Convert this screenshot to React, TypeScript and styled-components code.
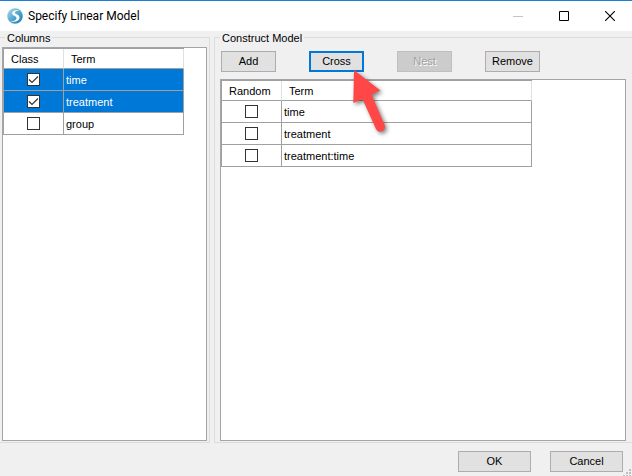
import React, { useState } from "react";
import styled, { createGlobalStyle, css } from "styled-components";

const GlobalStyle = createGlobalStyle`
  * { box-sizing: border-box; }
  body {
    margin: 0;
    background: #f0f0f0;
    color: #000;
    font: 11px/13px "Liberation Sans", Arial, sans-serif;
  }
  button, input { font: inherit; color: inherit; }
`;

const Dialog = styled.main`
  display: flex;
  flex-direction: column;
  min-height: 100vh;
  background: #f0f0f0;
`;

const TitleBar = styled.header`
  display: flex;
  align-items: center;
  height: 31px;
  padding-left: 7px;
  border-top: 1px solid #1a7fd4;
  background: #fff;
`;

const Title = styled.h1`
  flex: 1;
  margin: 0 0 0 5px;
  font: 12px/16px Roboto, "Open Sans", sans-serif;
`;

const CaptionButton = styled.button`
  display: grid;
  place-items: center;
  width: 46px;
  height: 29px;
  padding: 0;
  border: 0;
  background: none;
  &:last-child { margin-right: -1px; }
`;

const Panels = styled.div`
  display: grid;
  grid-template-columns: 210px 1fr;
  gap: 4px;
  flex: 1;
`;

const Group = styled.fieldset<{ $side: "left" | "right" }>`
  display: flex;
  flex-direction: column;
  min-width: 0;
  margin: 0;
  border: 1px solid #dcdcdc;
  ${({ $side }) =>
    $side === "left"
      ? css`border-left: 0; padding: 3px 2px 1px 2px;`
      : css`border-right: 0; padding: 7px 6px 1px 5px;`}
`;

const Legend = styled.legend<{ $indent: number }>`
  height: 13px;
  margin-left: ${({ $indent }) => $indent}px;
  padding: 0 2px;
  line-height: 15px;
`;

const ListBox = styled.div`
  flex: 1;
  border: 1px solid #a3a5ad;
  background: #fff;
`;

const Table = styled.table<{ $termWidth: number }>`
  table-layout: fixed;
  width: ${({ $termWidth }) => $termWidth + 61}px;
  border-collapse: separate;
  border-spacing: 0;
  border-top: 1px solid #a0a0a0;
  border-left: 1px solid #a0a0a0;
`;

const HeadCell = styled.th<{ $narrow?: boolean }>`
  width: ${({ $narrow }) => ($narrow ? "60px" : "auto")};
  height: 20px;
  padding: 2px 0 0 7px;
  border-right: 1px solid #e0e0e0;
  border-bottom: 1px solid #a0a0a0;
  font-weight: normal;
  text-align: left;
`;

const Row = styled.tr<{ $selected?: boolean }>`
  background: ${({ $selected }) => ($selected ? "#0078d7" : "#fff")};
  color: ${({ $selected }) => ($selected ? "#fff" : "#000")};
`;

const Cell = styled.td`
  height: 22px;
  padding: 0 2px;
  border-right: 1px solid #a0a0a0;
  border-bottom: 1px solid #a0a0a0;
`;

const NameCell = styled(Cell)`
  padding-top: 2px;
`;

const Check = styled.input`
  appearance: none;
  display: block;
  width: 13px;
  height: 13px;
  margin: 0 auto;
  border: 1px solid #333;
  background: #fff;
  &:checked {
    background: #fff
      url("data:image/svg+xml,%3Csvg xmlns='http://www.w3.org/2000/svg' viewBox='0 0 11 11'%3E%3Cpath d='M1 5.5 4 8.5 10 2.5' fill='none' stroke='%23333' stroke-width='1.2'/%3E%3C/svg%3E")
      center / 11px 11px no-repeat;
  }
`;

const Toolbar = styled.div`
  display: flex;
  gap: 33px;
  margin: 0 0 7px 1px;
`;

const Anchor = styled.div`
  position: relative;
`;

const Button = styled.button<{ $wide?: boolean; $focused?: boolean }>`
  display: block;
  width: ${({ $wide }) => ($wide ? 73 : 55)}px;
  height: 21px;
  padding: 0;
  border: ${({ $focused }) => ($focused ? "2px solid #0078d7" : "1px solid #adadad")};
  background: #e1e1e1;
  line-height: 13px;
  text-align: center;
  &:disabled {
    border-color: #bfbfbf;
    background: #ccc;
    color: #a0a0a0;
    text-shadow: 1px 1px 0 #fff;
  }
`;

const Pointer = styled.svg`
  position: absolute;
  top: 16px;
  left: 38px;
  z-index: 1;
  overflow: visible;
  pointer-events: none;
  filter: drop-shadow(2px 2px 2px rgba(0, 0, 0, 0.5));
`;

const Footer = styled.footer`
  position: relative;
  display: flex;
  justify-content: flex-end;
  gap: 19px;
  height: 33px;
  padding: 8px 9px 0 0;
`;

const Grip = styled.svg`
  position: absolute;
  right: 0;
  bottom: 0;
`;

type Term = { name: string; checked: boolean; selected?: boolean };

function TermTable({ flag, initial, termWidth }: { flag: string; initial: Term[]; termWidth: number }) {
  const [terms, setTerms] = useState(initial);
  const toggle = (name: string) =>
    setTerms(terms.map((t) => (t.name === name ? { ...t, checked: !t.checked } : t)));
  return (
    <Table $termWidth={termWidth}>
      <thead>
        <tr>
          <HeadCell scope="col" $narrow>{flag}</HeadCell>
          <HeadCell scope="col">Term</HeadCell>
        </tr>
      </thead>
      <tbody>
        {terms.map((t) => (
          <Row key={t.name} $selected={t.selected}>
            <Cell>
              <Check
                type="checkbox"
                aria-labelledby={`${flag}-${t.name}`}
                checked={t.checked}
                onChange={() => toggle(t.name)}
              />
            </Cell>
            <NameCell id={`${flag}-${t.name}`}>{t.name}</NameCell>
          </Row>
        ))}
      </tbody>
    </Table>
  );
}

const AppIcon = () => (
  <svg width="16" height="16" viewBox="0 0 16 16" aria-hidden="true">
    <defs>
      <linearGradient id="ball" x1="0" y1="0" x2="1" y2="1">
        <stop offset="0" stopColor="#b4dcec" />
        <stop offset="0.5" stopColor="#55a9d0" />
        <stop offset="1" stopColor="#1976ad" />
      </linearGradient>
    </defs>
    <circle cx="8" cy="8" r="7.8" fill="url(#ball)" />
    <path
      d="M12.5 2.2C8.5 1.6 5 3 5.2 5.6c.2 2.3 4.4 2.4 4.3 4.6-.1 2-3 3.1-6.3 2.9 4 1.6 9.3.3 9.3-3.5 0-3.3-4.7-3-4.7-5 0-1.4 2-2.2 4.700-2.400Z"
      fill="#fff"
    />
  </svg>
);

export default function App() {
  return (
    <>
      <GlobalStyle />
      <Dialog>
        <TitleBar>
          <AppIcon />
          <Title>Specify Linear Model</Title>
          <CaptionButton aria-label="Minimize" disabled>
            <svg width="10" height="10"><path d="M0 5.5h10" stroke="#c4c4c4" /></svg>
          </CaptionButton>
          <CaptionButton aria-label="Maximize">
            <svg width="10" height="10"><path d="M.5.5h9v9h-9z" fill="none" stroke="#000" /></svg>
          </CaptionButton>
          <CaptionButton aria-label="Close">
            <svg width="10" height="10"><path d="m0 0 10 10M10 0 0 10" stroke="#000" strokeWidth="1.1" /></svg>
          </CaptionButton>
        </TitleBar>
        <Panels>
          <Group $side="left">
            <Legend $indent={3}>Columns</Legend>
            <ListBox>
              <TermTable
                flag="Class"
                termWidth={120}
                initial={[
                  { name: "time", checked: true, selected: true },
                  { name: "treatment", checked: true, selected: true },
                  { name: "group", checked: false },
                ]}
              />
            </ListBox>
          </Group>
          <Group $side="right">
            <Legend $indent={0}>Construct Model</Legend>
            <Toolbar>
              <Button>Add</Button>
              <Anchor>
                <Button $focused>Cross</Button>
                <Pointer width="42" height="68" viewBox="0 0 42 68" aria-hidden="true">
                  <path
                    d="M7 3 33.3 23.5 24.5 27.5 37.6 58A4.7 4.7 0 0 1 29 62L15.6 32.3 6.3 36Z"
                    fill="#ff4747"
                  />
                </Pointer>
              </Anchor>
              <Button disabled>Nest</Button>
              <Button>Remove</Button>
            </Toolbar>
            <ListBox>
              <TermTable
                flag="Random"
                termWidth={250}
                initial={[
                  { name: "time", checked: false },
                  { name: "treatment", checked: false },
                  { name: "treatment:time", checked: false },
                ]}
              />
            </ListBox>
          </Group>
        </Panels>
        <Footer>
          <Button $wide>OK</Button>
          <Button $wide>Cancel</Button>
          <Grip width="9" height="7" viewBox="0 0 9 7" aria-hidden="true">
            <path d="M6 0h2v2H6zM3 3h2v2H3zM6 3h2v2H6zM0 6h2v1H0zM3 6h2v1H3zM6 6h2v1H6z" fill="#bfbfbf" />
          </Grip>
        </Footer>
      </Dialog>
    </>
  );
}
